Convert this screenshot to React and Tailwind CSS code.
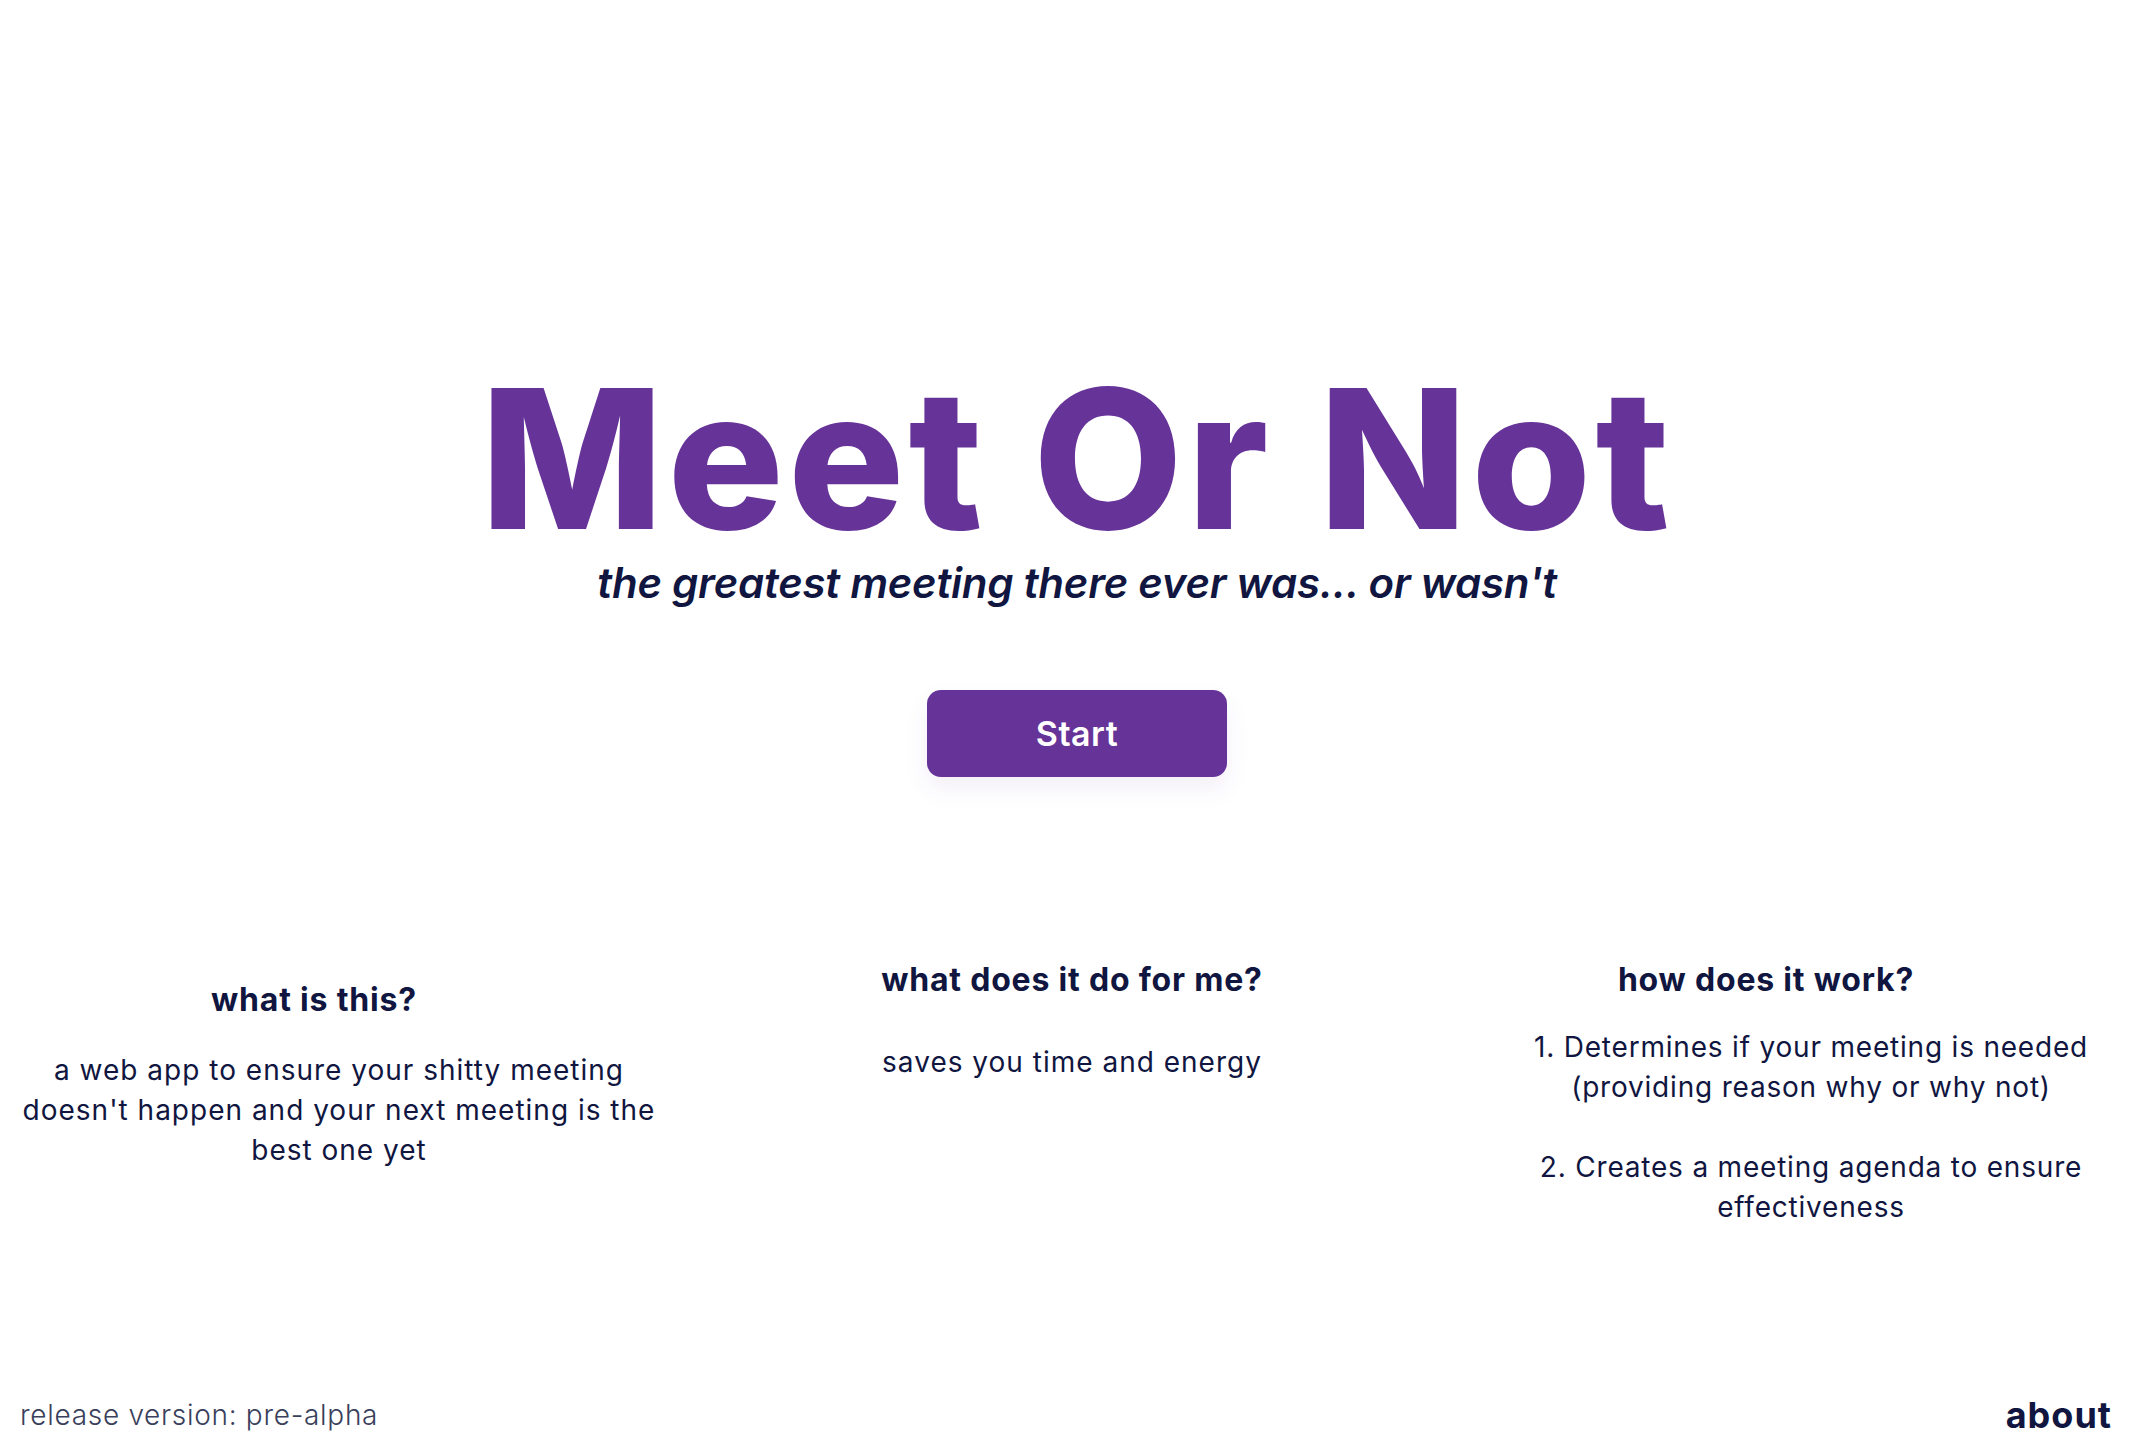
import React from 'react';

// Landing page for "Meet Or Not"
export default function App() {
  return (
    <div className="min-h-screen w-full flex flex-col bg-white text-[#10163f] font-['Inter','Open_Sans',sans-serif]">
      {/* Hero */}
      <div className="flex flex-col items-center pt-[362px] pl-[12px]">
        <h1 className="text-[194px] leading-none font-extrabold tracking-[4px] text-[#663399]">
          Meet Or Not
        </h1>
        <p className="mt-[1px] text-[42px] leading-tight font-semibold italic tracking-[-0.25px]">
          the greatest meeting there ever was... or wasn't
        </p>
        <button className="mt-[80px] w-[300px] h-[87px] rounded-[14px] bg-[#663399] text-white text-[34px] font-semibold tracking-[0.5px] shadow-[0_12px_24px_rgba(102,51,153,0.08)]">
          Start
        </button>
      </div>

      {/* Info columns */}
      <div className="flex mt-[183px]">
        <div className="w-[678px] flex flex-col items-center text-center">
          <h2 className="pr-[50px] mt-[20px] text-[32px] font-bold leading-[40px] tracking-[0.8px]">what is this?</h2>
          <p className="mt-[30px] w-[640px] text-[28px] leading-[40px] tracking-[1px]">
            a web app to ensure your shitty meeting doesn't happen and your next meeting is the best one yet
          </p>
        </div>
        <div className="ml-[64px] w-[660px] flex flex-col items-center text-center">
          <h2 className="text-[32px] font-bold leading-[40px] tracking-[0.8px]">what does it do for me?</h2>
          <p className="mt-[42px] text-[28px] leading-[40px] tracking-[1px]">saves you time and energy</p>
        </div>
        <div className="ml-[99px] w-[620px] flex flex-col items-center text-center">
          <h2 className="pr-[90px] text-[32px] font-bold leading-[40px] tracking-[0.8px]">how does it work?</h2>
          <p className="mt-[27px] w-[590px] text-[28px] leading-[40px] tracking-[0.8px]">
            1. Determines if your meeting is needed (providing reason why or why not)
            <br />
            <br />
            2. Creates a meeting agenda to ensure effectiveness
          </p>
        </div>
      </div>

      {/* Footer */}
      <div className="mt-auto flex items-center justify-between pl-[20px] pr-[30px] pb-0">
        <span className="text-[28px] font-light tracking-[0.7px] text-[#3a3f5c]">release version: pre-alpha</span>
        <a className="text-[36px] font-bold tracking-[1px] cursor-pointer">about</a>
      </div>
    </div>
  );
}
